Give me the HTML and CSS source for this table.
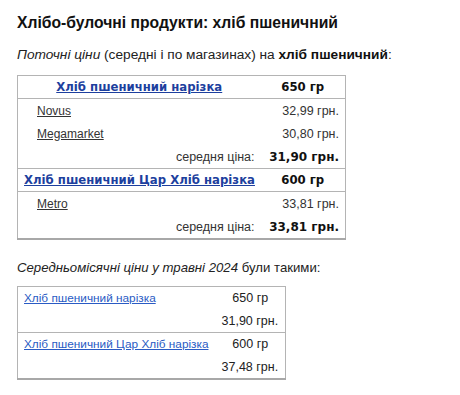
FILE: index.html
```html
<!DOCTYPE html>
<html lang="uk">
<head>
<meta charset="utf-8">
<title>Хліб пшеничний</title>
<link rel="stylesheet" href="styles.css">
</head>
<body>
<div class="page">
  <h1 class="title">Хлібо-булочні продукти: хліб пшеничний</h1>
  <p class="intro"><i>Поточні ціни</i> (середні і по магазинах) на <b>хліб пшеничний</b>:</p>
  <table class="current">
    <colgroup><col class="c1"><col class="c2"></colgroup>
    <tr class="head">
      <td class="name"><a href="#" class="plink">Хліб пшеничний нарізка</a></td>
      <td class="weight">650 гр</td>
    </tr>
    <tr class="store">
      <td class="shop"><a href="#">Novus</a></td>
      <td class="price">32,99 грн.</td>
    </tr>
    <tr class="store">
      <td class="shop"><a href="#">Megamarket</a></td>
      <td class="price">30,80 грн.</td>
    </tr>
    <tr class="avg">
      <td class="avglabel">середня ціна:</td>
      <td class="avgprice">31,90 грн.</td>
    </tr>
    <tr class="head">
      <td class="name"><a href="#" class="plink">Хліб пшеничний Цар Хліб нарізка</a></td>
      <td class="weight">600 гр</td>
    </tr>
    <tr class="store">
      <td class="shop"><a href="#">Metro</a></td>
      <td class="price">33,81 грн.</td>
    </tr>
    <tr class="avg">
      <td class="avglabel">середня ціна:</td>
      <td class="avgprice">33,81 грн.</td>
    </tr>
  </table>
  <p class="month"><i>Середньомісячні ціни у травні 2024</i> були такими:</p>
  <table class="monthly">
    <colgroup><col class="m1"><col class="m2"></colgroup>
    <tr>
      <td class="mname"><a href="#">Хліб пшеничний нарізка</a></td>
      <td class="mweight">650 гр</td>
    </tr>
    <tr class="sep">
      <td></td>
      <td class="mprice">31,90 грн.</td>
    </tr>
    <tr>
      <td class="mname"><a href="#">Хліб пшеничний Цар Хліб нарізка</a></td>
      <td class="mweight">600 гр</td>
    </tr>
    <tr>
      <td></td>
      <td class="mprice">37,48 грн.</td>
    </tr>
  </table>
</div>
</body>
</html>
```

FILE: styles.css
```css
html, body {
  margin: 0;
  padding: 0;
  background: #fff;
}
body {
  font-family: "Liberation Sans", Arial, sans-serif;
  color: #222;
}
.page {
  padding: 13px 17px 0 17px;
}
.title {
  margin: 0;
  font-size: 15.7px;
  line-height: 20px;
  font-weight: bold;
  color: #111;
}
.intro {
  margin: 13px 0 0 0;
  font-size: 13.7px;
  line-height: 18px;
  color: #222;
}
.intro b {
  color: #111;
}
table {
  border-collapse: collapse;
  table-layout: fixed;
  font-size: 12px;
}
td {
  white-space: nowrap;
}
.current {
  margin-top: 11px;
  width: 328px;
  border: 1px solid #b4b4b4;
  border-bottom: 2px solid #a8a8a8;
}
.current .c1 {
  width: 243px;
}
.current .c2 {
  width: 85px;
}
.current td {
  height: 23px;
  padding: 0 6px;
  vertical-align: middle;
}
.current .head td {
  height: 22px;
  border-top: 1px solid #b4b4b4;
  border-bottom: 1px solid #b4b4b4;
  font-family: "DejaVu Sans", Verdana, sans-serif;
  font-weight: bold;
  font-size: 11.7px;
}
.current .name {
  text-align: center;
}
.plink {
  color: #1d3f9e;
  text-decoration: underline;
}
.current .weight {
  text-align: center;
  color: #111;
}
.current .shop {
  padding-left: 19px;
}
.shop a {
  color: #333;
  text-decoration: underline;
}
.price {
  text-align: right;
  color: #333;
  font-size: 12.5px;
}
.avglabel {
  text-align: right;
  color: #333;
  font-size: 12.5px;
}
.current .avgprice {
  text-align: right;
  padding-left: 0;
  font-family: "DejaVu Sans", Verdana, sans-serif;
  font-weight: bold;
  font-size: 12px;
  color: #111;
}
.month {
  margin: 19px 0 0 0;
  font-size: 13.2px;
  line-height: 18px;
}
.monthly {
  margin-top: 9px;
  width: 268px;
  border: 1px solid #b4b4b4;
  border-bottom: 2px solid #a8a8a8;
}
.monthly .m1 {
  width: 198px;
}
.monthly .m2 {
  width: 70px;
}
.monthly td {
  height: 22.5px;
  padding: 0 6px;
  vertical-align: middle;
}
.monthly .mprice {
  padding-right: 7px;
}
.monthly .sep td {
  border-bottom: 1px solid #b4b4b4;
}
.mname a {
  color: #2a5bc4;
  text-decoration: underline;
  font-size: 11.8px;
}
.mweight {
  text-align: center;
  color: #222;
  font-size: 12.5px;
}
.mprice {
  text-align: right;
  color: #222;
  font-size: 12.5px;
}
```
